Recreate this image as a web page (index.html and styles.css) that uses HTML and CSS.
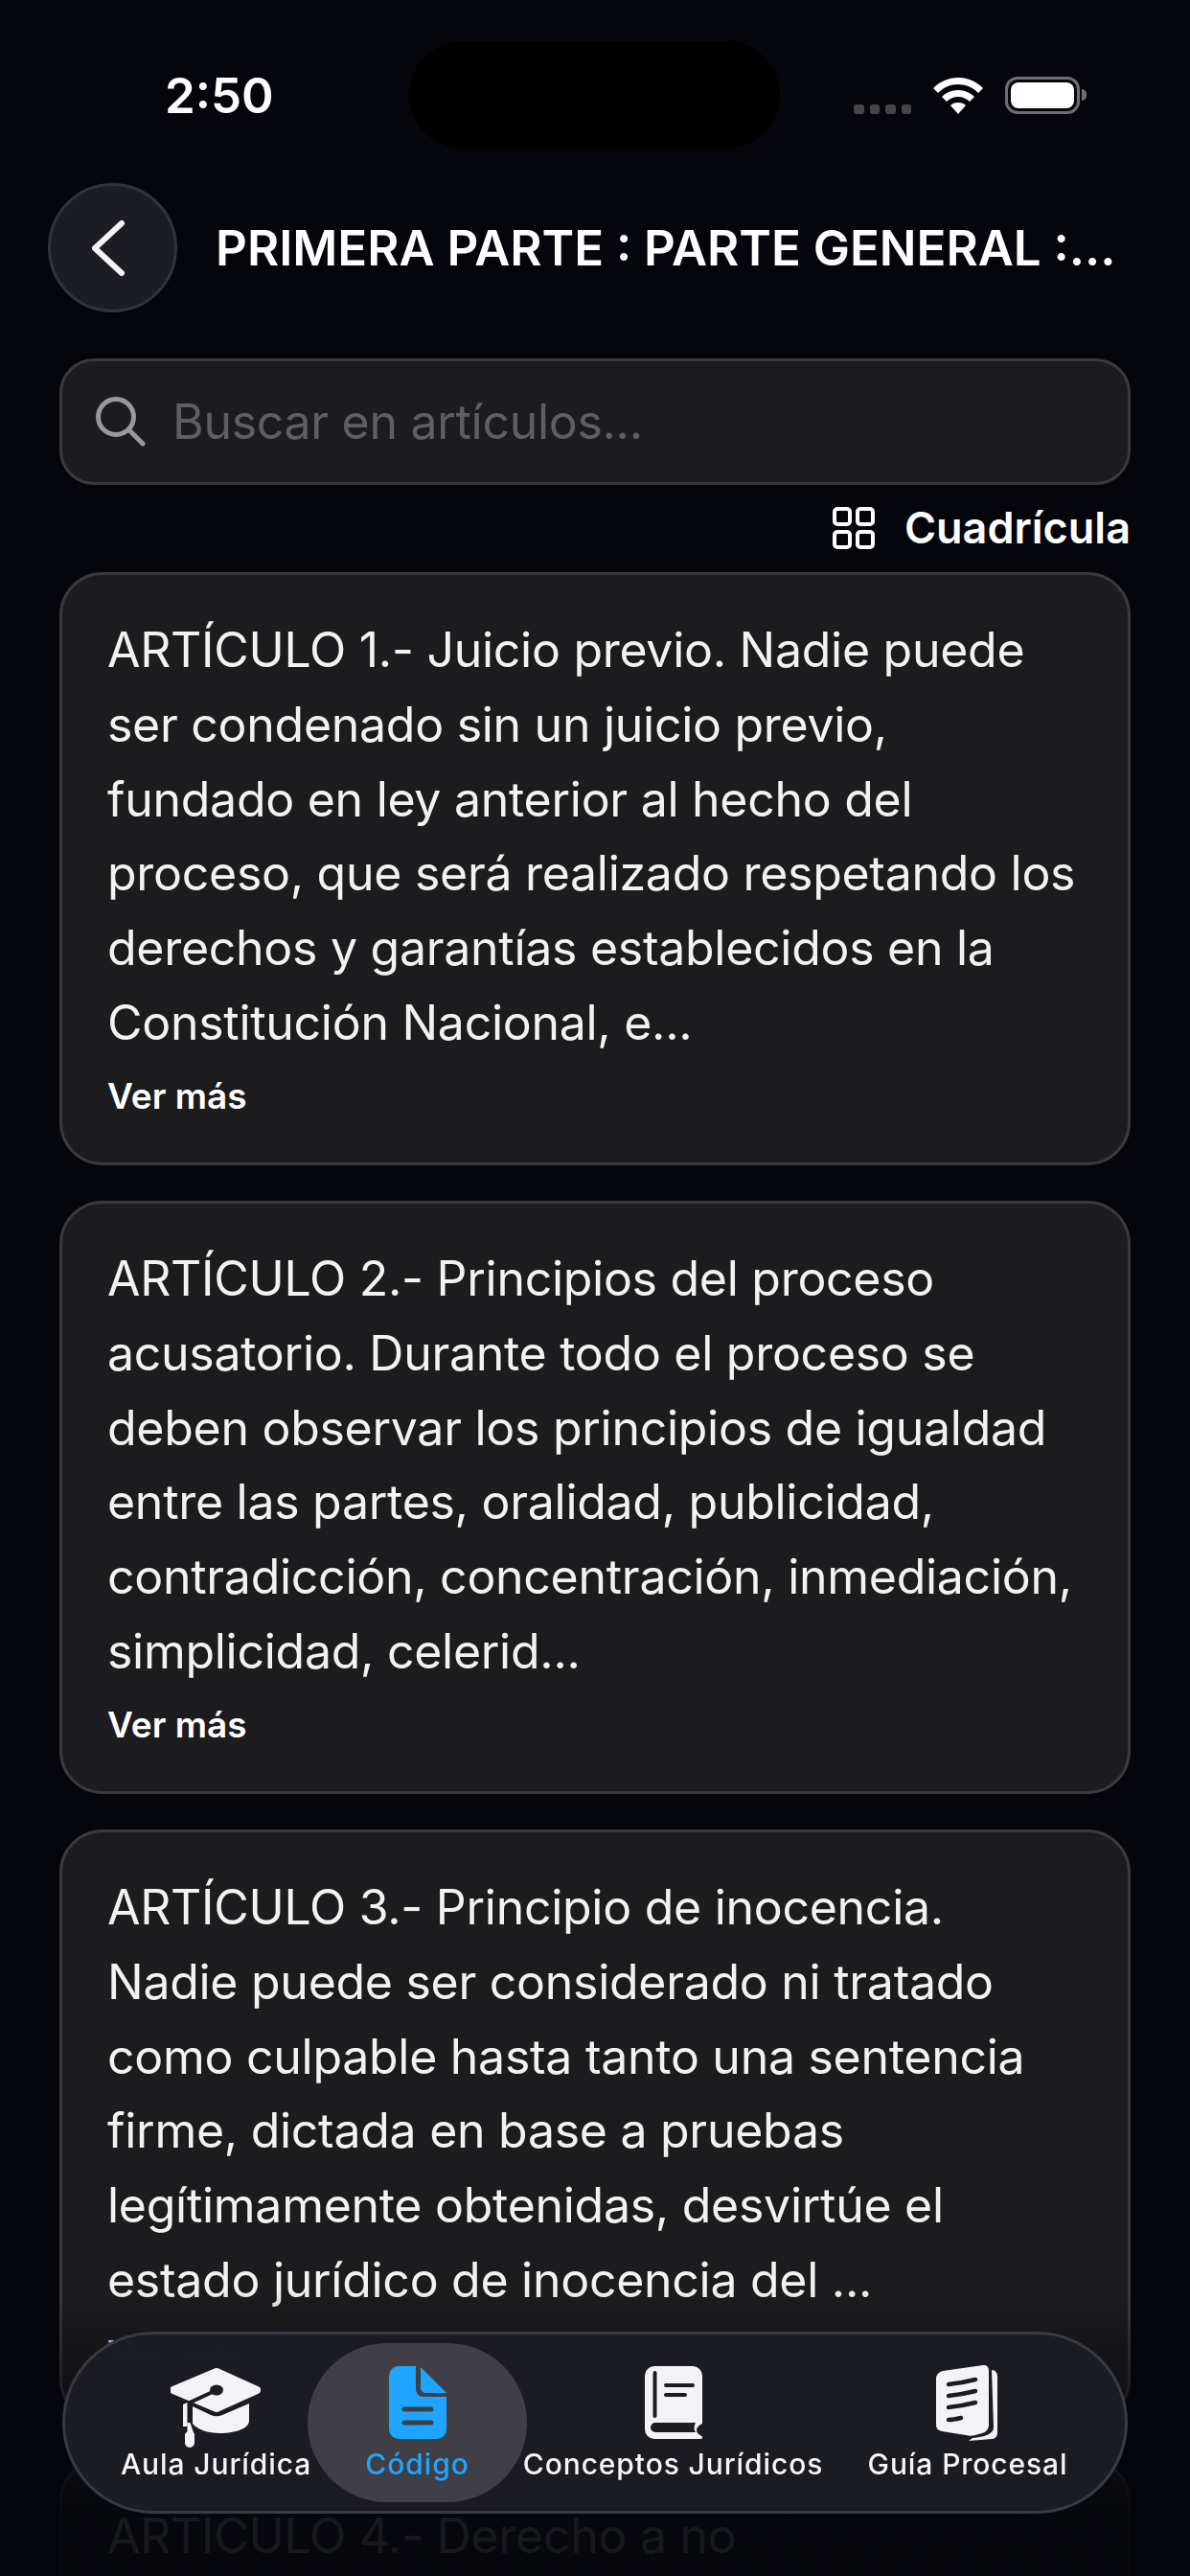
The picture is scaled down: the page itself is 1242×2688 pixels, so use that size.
FILE: index.html
```html
<!DOCTYPE html>
<html lang="es">
<head>
  <meta charset="UTF-8" />
  <meta name="viewport" content="width=device-width, initial-scale=1.0" />
  <title>Artículos</title>
  <link rel="stylesheet" href="styles.css">
</head>
<body>
  <div class="screen">
    <div class="status-bar">
      <div class="status-time">2:50</div>
      <div class="island"></div>
      <div class="status-icons">
        <div class="signal"><i></i><i></i><i></i><i></i></div>
        <svg class="wifi" viewBox="0 0 52 38" width="52" height="38">
          <path fill="#fff" d="M26 0C16 0 7 4 0 11l5 5C11 10 18 7 26 7s15 3 21 9l5-5C45 4 36 0 26 0z"/>
          <path fill="#fff" d="M26 13c-7 0-13 3-17 7l5 5c3-3 7-5 12-5s9 2 12 5l5-5c-4-4-10-7-17-7z"/>
          <path fill="#fff" d="M26 26c-4 0-6 1-8 3l8 9 8-9c-2-2-4-3-8-3z"/>
        </svg>
        <div class="battery"><div class="battery-fill"></div></div>
        <div class="battery-cap"></div>
      </div>
    </div>

    <div class="header">
      <div class="back-btn">
        <svg viewBox="0 0 38 60" width="38" height="60">
          <path fill="none" stroke="#f2f2f7" stroke-width="6" stroke-linecap="round" stroke-linejoin="round" d="M33 4L5 30l28 26"/>
        </svg>
      </div>
      <div class="title">PRIMERA PARTE : PARTE GENERAL :...</div>
    </div>

    <div class="search">
      <svg viewBox="0 0 52 52" width="52" height="52">
        <circle cx="21" cy="21" r="18.5" fill="none" stroke="#98989e" stroke-width="5"/>
        <path stroke="#98989e" stroke-width="5" stroke-linecap="round" d="M35 35l14 14"/>
      </svg>
      <span class="search-text">Buscar en artículos...</span>
    </div>

    <div class="view-toggle">
      <svg viewBox="0 0 44 44" width="44" height="44">
        <g fill="none" stroke="#fff" stroke-width="4">
          <rect x="2" y="2" width="16" height="16" rx="3"/>
          <rect x="26" y="2" width="16" height="16" rx="3"/>
          <rect x="2" y="26" width="16" height="16" rx="3"/>
          <rect x="26" y="26" width="16" height="16" rx="3"/>
        </g>
      </svg>
      <span>Cuadrícula</span>
    </div>

    <div class="articles">
      <div class="card">
        <p class="card-text">ARTÍCULO 1.- Juicio previo. Nadie puede<br>ser condenado sin un juicio previo,<br>fundado en ley anterior al hecho del<br>proceso, que será realizado respetando los<br>derechos y garantías establecidos en la<br>Constitución Nacional, e...</p>
        <div class="more">Ver más</div>
      </div>
      <div class="card">
        <p class="card-text">ARTÍCULO 2.- Principios del proceso<br>acusatorio. Durante todo el proceso se<br>deben observar los principios de igualdad<br>entre las partes, oralidad, publicidad,<br>contradicción, concentración, inmediación,<br>simplicidad, celerid...</p>
        <div class="more">Ver más</div>
      </div>
      <div class="card">
        <p class="card-text">ARTÍCULO 3.- Principio de inocencia.<br>Nadie puede ser considerado ni tratado<br>como culpable hasta tanto una sentencia<br>firme, dictada en base a pruebas<br>legítimamente obtenidas, desvirtúe el<br>estado jurídico de inocencia del ...</p>
        <div class="more">Ver más</div>
      </div>
      <div class="card">
        <p class="card-text">ARTÍCULO 4.- Derecho a no</p>
      </div>
    </div>

    <div class="fade"></div>

    <nav class="tabbar">
      <div class="tab">
        <svg class="icon-cap" viewBox="9 7 96 84" width="96" height="84">
          <path fill="#f2f2f7" stroke="#f2f2f7" stroke-width="8" stroke-linejoin="round" d="M57 11L99 30L57 49L12 30z"/>
          <path fill="none" stroke="#1c1d22" stroke-width="4" stroke-linecap="round" d="M57 30L27 44"/>
          <ellipse cx="57" cy="30" rx="7" ry="5.500" fill="#1c1d22"/>
          <path fill="#f2f2f7" d="M32 47L51 56q6 2.500 12 0L91 44V62c0 8-14 13-30 13-14 0-24-4-29-10z"/>
          <path fill="#f2f2f7" d="M22 45l4.500-2V68H22z"/>
          <path fill="#f2f2f7" d="M26.500 64h3l3 9 1.500 3v9a5 5 0 0 1-10 0v-9l2.500-3z"/>
        </svg>
        <span class="tab-label">Aula Jurídica</span>
      </div>
      <div class="tab tab-active">
        <svg viewBox="0 0 60 76" width="60" height="76">
          <path fill="#1fa5ff" d="M10 0H28V24a8 8 0 0 0 8 8H60V66a10 10 0 0 1-10 10H10A10 10 0 0 1 0 66V10A10 10 0 0 1 10 0z"/>
          <path fill="#1fa5ff" d="M33 1L60 28H38a5 5 0 0 1-5-5z"/>
          <path stroke="#3f3f45" stroke-width="5" stroke-linecap="round" d="M16 45H44M16 59H44"/>
        </svg>
        <span class="tab-label">Código</span>
      </div>
      <div class="tab">
        <svg viewBox="0 0 60 76" width="60" height="76">
          <path fill="#f2f2f7" d="M10 0H50A10 10 0 0 1 60 10V60C56 62 54 64 54 67C54 70 57 72 61 74C61 75 60 76 58 76H10A10 10 0 0 1 0 66V10A10 10 0 0 1 10 0z"/>
          <path stroke="#1c1d22" stroke-width="4" stroke-linecap="round" d="M10.500 7V52M22 20H50M22 30H42" fill="none"/>
          <path fill="#1c1d22" d="M11 59H53C51 63 51 66 53 69H11A5 5 0 0 1 11 59z"/>
        </svg>
        <span class="tab-label">Conceptos Jurídicos</span>
      </div>
      <div class="tab">
        <svg class="icon-papers" viewBox="0 0 66 80" width="66" height="80">
          <path fill="#f2f2f7" d="M58 6c4 0 6 3 6 7v58c0 4-2 7-6 7l-24 2 4-3c12-1 22-4 22-11z"/>
          <path fill="#f2f2f7" d="M7 7L49 1c4-.5 6 2 6 6v56c0 5-3 8-7 9l-7 2c-4 1-6 1-10 0L6 70c-4-1-6-3-6-7V15c0-4 3-7 7-8z"/>
          <path stroke="#1c1d22" stroke-width="4.500" stroke-linecap="round" fill="none" d="M13 21c10-1 20-3 28-5M13 33c10-1 20-3 28-5M13 45c10-1 20-3 28-5M13 58c4 0 9-1 13-2"/>
        </svg>
        <span class="tab-label">Guía Procesal</span>
      </div>
    </nav>
  </div>
</body>
</html>
```

FILE: styles.css
```css
* {
  box-sizing: border-box;
}
html, body {
  margin: 0;
  padding: 0;
  background-color: #05060b;
}
body {
  font-family: Inter, "Noto Sans", sans-serif;
  color: #f5f5f7;
}
.screen {
  position: relative;
  width: 1242px;
  height: 2688px;
  overflow: hidden;
  background-color: #05060b;
}

/* Barra de estado */
.status-bar {
  display: grid;
  grid-template-columns: 427px 387px 1fr;
  align-items: center;
  height: 155px;
  padding-top: 43px;
}
.status-time {
  padding-left: 172px;
  font-size: 51px;
  font-weight: 600;
  color: #fff;
}
.island {
  height: 112px;
  border-radius: 56px;
  background-color: #000;
}
.status-icons {
  display: flex;
  align-items: flex-end;
  padding-left: 77px;
}
.signal {
  display: flex;
  gap: 6px;
  margin-right: 23px;
}
.signal i {
  display: block;
  width: 10.5px;
  height: 10px;
  border-radius: 3px;
  background-color: #46464a;
}
.battery {
  width: 78px;
  height: 39px;
  margin-left: 23px;
  padding: 3px;
  border: 3px solid #6e6e72;
  border-radius: 13px;
}
.battery-fill {
  width: 100%;
  height: 100%;
  border-radius: 8px;
  background-color: #fff;
}
.battery-cap {
  width: 5px;
  height: 12px;
  margin: 0 0 14px 2px;
  border-radius: 0 6px 6px 0;
  background-color: #6e6e72;
}

/* Cabecera */
.header {
  display: flex;
  align-items: center;
  gap: 40px;
  margin-top: 36px;
  padding-left: 50px;
}
.back-btn {
  display: flex;
  align-items: center;
  justify-content: center;
  width: 135px;
  height: 135px;
  padding-right: 9px;
  border: 3px solid #31333b;
  border-radius: 50%;
  background-color: #1c1d22;
}
.title {
  font-size: 51px;
  font-weight: 600;
  color: #fff;
  white-space: nowrap;
}

/* Buscador */
.search {
  display: flex;
  align-items: center;
  gap: 28px;
  height: 132px;
  margin: 48px 62px 0;
  padding-left: 35px;
  border: 3px solid #3a3a3c;
  border-radius: 36px;
  background-color: #1c1c1e;
}
.search-text {
  font-size: 50px;
  letter-spacing: -0.3px;
  color: #5f5f63;
}
.view-toggle {
  display: flex;
  align-items: center;
  justify-content: flex-end;
  gap: 31px;
  height: 89px;
  margin-bottom: 2px;
  padding-right: 62px;
  font-size: 45px;
  font-weight: 600;
  color: #fff;
}

/* Tarjetas */
.articles {
  display: flex;
  flex-direction: column;
  gap: 37px;
  padding: 0 62px;
}
.card {
  height: 619px;
  flex-shrink: 0;
  padding: 40px 47px 47px;
  border: 3px solid #3a3a3c;
  border-radius: 45px;
  background-color: #1c1c1e;
}
.card-text {
  margin: 0;
  font-size: 50px;
  line-height: 77.8px;
  letter-spacing: -0.28px;
  white-space: nowrap;
  color: #f2f2f2;
}
.more {
  margin-top: 15px;
  font-size: 37px;
  line-height: 44px;
  font-weight: 600;
  color: #fff;
}

/* Degradado inferior */
.fade {
  position: absolute;
  left: 0;
  right: 0;
  bottom: 0;
  height: 300px;
  background: linear-gradient(to bottom, rgba(5, 6, 11, 0), rgba(5, 6, 11, 0.5) 35%, rgba(5, 6, 11, 0.92) 78%);
}

/* Barra de pestañas */
.tabbar {
  position: absolute;
  left: 65px;
  top: 2433px;
  display: grid;
  grid-template-columns: 191px 229px 305px 310px;
  align-items: stretch;
  width: 1112px;
  height: 190px;
  padding: 9px 0 9px 62px;
  border: 3px solid #383a43;
  border-radius: 95px;
  background-color: rgba(28, 29, 34, 0.98);
  backdrop-filter: blur(6px);
}
.tab {
  display: flex;
  flex-direction: column;
  align-items: center;
  justify-content: flex-end;
  height: 166px;
  padding-bottom: 22px;
  border-radius: 83px;
}
.tab svg {
  margin-bottom: 8px;
}
.tab .icon-cap {
  margin-bottom: -2px;
}
.tab .icon-papers {
  margin-bottom: 6px;
}
.tab-active {
  background-color: #3f3f45;
  color: #1fa5ff;
}
.tab-label {
  font-size: 30px;
  line-height: 36px;
  font-weight: 500;
  letter-spacing: 0.9px;
  white-space: nowrap;
}
```
